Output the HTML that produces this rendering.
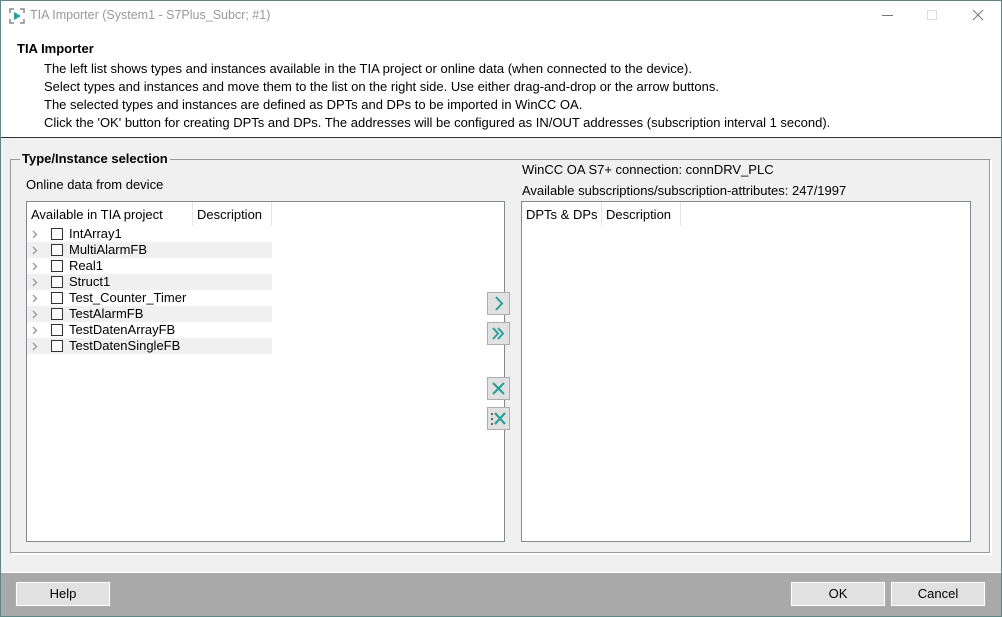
<!DOCTYPE html>
<html><head><style>
*{margin:0;padding:0;box-sizing:border-box}
body{width:1002px;height:617px;position:relative;background:#f0f0f0;font-family:"Liberation Sans",Arial,sans-serif;font-size:13px;color:#000;overflow:hidden}
.a{position:absolute}
.win{position:absolute;left:0;top:0;width:1002px;height:617px;border:1px solid #5f8585}
.row{position:absolute;left:0;height:16px;width:245px;line-height:16px}
.row.alt{background:#f0f0f0}
.chev{position:absolute;left:5px;top:4px}
.cb{position:absolute;left:24px;top:2px;width:12px;height:12px;border:1px solid #333;background:#fff}
.lbl{position:absolute;left:42px;top:0}
.btn{position:absolute;background:#e1e1e1;border:1px solid #fff;outline:1px solid #adadad;text-align:center;font-size:13px;line-height:22px}
.ib{position:absolute;left:487px;width:23px;height:23px;background:#e1e1e1;border:1px solid #adadad}
</style></head><body>
<div class="a" style="left:0;top:0;width:1002px;height:31px;background:#fff"></div>
<svg class="a" style="left:9px;top:8px" width="16" height="16" viewBox="0 0 16 16"><path d="M1 5V1h4M11 1h4v4M15 11v4h-4M5 15H1v-4" stroke="#888" stroke-width="1.5" fill="none"/><path d="M5 4l7 4-7 4z" fill="#2aa198"/></svg>
<div class="a" style="left:30px;top:8px;color:#999;font-size:12.5px">TIA Importer (System1 - S7Plus_Subcr; #1)</div>
<div class="a" style="left:882px;top:15px;width:11px;height:1px;background:#777"></div>
<div class="a" style="left:927px;top:10px;width:10px;height:10px;border:1px solid #ddd"></div>
<svg class="a" style="left:972px;top:9px" width="12" height="12"><path d="M1 1l10 10M11 1L1 11" stroke="#777" stroke-width="1"/></svg>
<div class="a" style="left:0;top:31px;width:1002px;height:107px;background:#fff;border-bottom:1px solid #333"></div>
<div class="a" style="left:17px;top:41px;font-weight:bold;font-size:13px">TIA Importer</div>
<div class="a" style="left:44px;top:60px;line-height:18px">The left list shows types and instances available in the TIA project or online data (when connected to the device).<br>Select types and instances and move them to the list on the right side. Use either drag-and-drop or the arrow buttons.<br>The selected types and instances are defined as DPTs and DPs to be imported in WinCC OA.<br>Click the 'OK' button for creating DPTs and DPs. The addresses will be configured as IN/OUT addresses (subscription interval 1 second).</div>
<div class="a" style="left:10px;top:159px;width:981px;height:395px;border:1px solid #999;border-right-color:#fff;border-bottom-color:#fff;box-shadow:inset -1px -1px 0 #999,1px 1px 0 #fff"></div>
<div class="a" style="left:20px;top:151px;padding:0 2px;background:#f0f0f0;font-weight:bold">Type/Instance selection</div>
<div class="a" style="left:26px;top:177px">Online data from device</div>
<div class="a" style="left:522px;top:162px">WinCC OA S7+ connection: connDRV_PLC</div>
<div class="a" style="left:522px;top:183px">Available subscriptions/subscription-attributes: 247/1997</div>
<div class="a" style="left:26px;top:201px;width:479px;height:341px;background:#fff;border:1px solid #828790">
 <div class="a" style="left:4px;top:5px">Available in TIA project</div>
 <div class="a" style="left:165px;top:0;width:1px;height:24px;background:#e5e5e5"></div>
 <div class="a" style="left:170px;top:5px">Description</div>
 <div class="a" style="left:244px;top:0;width:1px;height:24px;background:#e5e5e5"></div>
 <div class="a" style="left:0;top:24px;width:245px">
  <div class="row" style="top:0"><svg class="chev" width="6" height="9"><path d="M1 1l3.5 3.5L1 8" stroke="#999" stroke-width="1.3" fill="none"/></svg><span class="cb"></span><span class="lbl">IntArray1</span></div>
  <div class="row alt" style="top:16px"><svg class="chev" width="6" height="9"><path d="M1 1l3.5 3.5L1 8" stroke="#999" stroke-width="1.3" fill="none"/></svg><span class="cb"></span><span class="lbl">MultiAlarmFB</span></div>
  <div class="row" style="top:32px"><svg class="chev" width="6" height="9"><path d="M1 1l3.5 3.5L1 8" stroke="#999" stroke-width="1.3" fill="none"/></svg><span class="cb"></span><span class="lbl">Real1</span></div>
  <div class="row alt" style="top:48px"><svg class="chev" width="6" height="9"><path d="M1 1l3.5 3.5L1 8" stroke="#999" stroke-width="1.3" fill="none"/></svg><span class="cb"></span><span class="lbl">Struct1</span></div>
  <div class="row" style="top:64px"><svg class="chev" width="6" height="9"><path d="M1 1l3.5 3.5L1 8" stroke="#999" stroke-width="1.3" fill="none"/></svg><span class="cb"></span><span class="lbl">Test_Counter_Timer</span></div>
  <div class="row alt" style="top:80px"><svg class="chev" width="6" height="9"><path d="M1 1l3.5 3.5L1 8" stroke="#999" stroke-width="1.3" fill="none"/></svg><span class="cb"></span><span class="lbl">TestAlarmFB</span></div>
  <div class="row" style="top:96px"><svg class="chev" width="6" height="9"><path d="M1 1l3.5 3.5L1 8" stroke="#999" stroke-width="1.3" fill="none"/></svg><span class="cb"></span><span class="lbl">TestDatenArrayFB</span></div>
  <div class="row alt" style="top:112px"><svg class="chev" width="6" height="9"><path d="M1 1l3.5 3.5L1 8" stroke="#999" stroke-width="1.3" fill="none"/></svg><span class="cb"></span><span class="lbl">TestDatenSingleFB</span></div>
 </div>
</div>
<div class="a" style="left:521px;top:201px;width:450px;height:341px;background:#fff;border:1px solid #828790">
 <div class="a" style="left:4px;top:5px">DPTs &amp; DPs</div>
 <div class="a" style="left:79px;top:0;width:1px;height:24px;background:#e5e5e5"></div>
 <div class="a" style="left:84px;top:5px">Description</div>
 <div class="a" style="left:158px;top:0;width:1px;height:24px;background:#e5e5e5"></div>
</div>
<div class="ib" style="top:292px"><svg width="21" height="21"><path d="M8 4l6 6.5-6 6.5" stroke="#2aa198" stroke-width="2" fill="none"/></svg></div>
<div class="ib" style="top:322px"><svg width="21" height="21"><path d="M5 5l5 5.5-5 5.5M10 5l5 5.5-5 5.5" stroke="#2aa198" stroke-width="2" fill="none"/></svg></div>
<div class="ib" style="top:377px"><svg width="21" height="21"><path d="M5 5l11 11M16 5L5 16" stroke="#2aa198" stroke-width="2.2"/></svg></div>
<div class="ib" style="top:407px"><svg width="21" height="21"><path d="M3 5h2v2H3zM3 10h2v2H3zM3 15h2v2H3z" fill="#666"/><path d="M7 5l10 11M17 5L7 16" stroke="#2aa198" stroke-width="2.2"/></svg></div>
<div class="a" style="left:1px;top:572px;width:1000px;height:44px;background:#a9a9a9;border-top:1px solid #fff"></div>
<div class="btn" style="left:16px;top:582px;width:94px;height:24px">Help</div>
<div class="btn" style="left:791px;top:582px;width:94px;height:24px">OK</div>
<div class="btn" style="left:891px;top:582px;width:94px;height:24px">Cancel</div>
<div class="win"></div>
</body></html>
